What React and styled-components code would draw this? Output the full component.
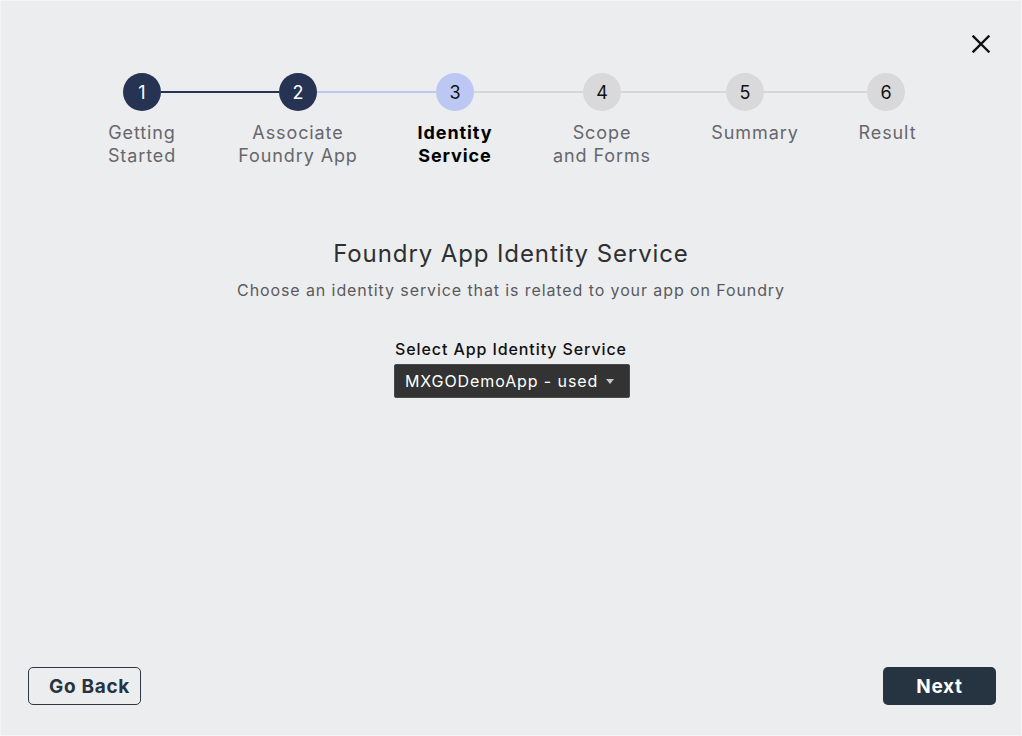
import React from 'react';
import styled, { createGlobalStyle } from 'styled-components';

const GlobalStyle = createGlobalStyle`
  html, body {
    margin: 0;
    padding: 0;
    background: #ecedef;
  }
  * {
    box-sizing: border-box;
  }
`;

const Dialog = styled.div`
  width: 1022px;
  height: 736px;
  display: flex;
  flex-direction: column;
  background: #ecedef;
  border: 1px solid #f4f4f6;
  font-family: Inter, 'Noto Sans', sans-serif;
  letter-spacing: 0.9px;
  overflow: hidden;
`;

const TopBar = styled.div`
  display: flex;
  justify-content: flex-end;
  padding: 31px 28px 0 0;
  height: 55px;
`;

const CloseButton = styled.button`
  width: 24px;
  height: 24px;
  padding: 0;
  border: none;
  background: none;
  display: flex;
  align-items: center;
  justify-content: center;
  cursor: pointer;
`;

const Stepper = styled.div`
  display: flex;
  padding-left: 62px;
  margin-top: 17px;
`;

const Step = styled.div`
  flex: 0 0 ${(p) => p.width}px;
  display: flex;
  flex-direction: column;
  align-items: center;
`;

const CircleRow = styled.div`
  width: 100%;
  display: flex;
  align-items: center;
`;

const Line = styled.div`
  flex: 1;
  height: 2px;
  background: ${(p) => p.color};
`;

const Circle = styled.div`
  width: 38px;
  height: 38px;
  border-radius: 50%;
  display: flex;
  align-items: center;
  justify-content: center;
  font-size: 18px;
  letter-spacing: 0;
  background: ${(p) =>
    p.state === 'done' ? '#263352' : p.state === 'active' ? '#bcc8f3' : '#d9d9db'};
  color: ${(p) => (p.state === 'done' ? '#ffffff' : '#111111')};
`;

const StepLabel = styled.div`
  margin-top: 10px;
  margin-left: ${(p) => p.shift || 0}px;
  font-size: 18px;
  line-height: 23px;
  text-align: center;
  white-space: nowrap;
  font-weight: ${(p) => (p.active ? 700 : 400)};
  color: ${(p) => (p.active ? '#000000' : '#67676b')};
`;

const Content = styled.div`
  display: flex;
  flex-direction: column;
  align-items: center;
  margin-top: 72px;
`;

const Title = styled.h2`
  margin: 0;
  font-size: 24px;
  line-height: 30px;
  font-weight: 400;
  color: #2f2f31;
`;

const Subtitle = styled.p`
  margin: 11px 0 0;
  font-size: 16px;
  line-height: 20px;
  color: #5a5a5e;
`;

const FieldLabel = styled.label`
  margin-top: 39px;
  font-size: 16px;
  line-height: 20px;
  font-weight: 500;
  color: #111111;
`;

const Select = styled.div`
  margin-top: 5px;
  height: 34px;
  width: 236px;
  display: flex;
  align-items: center;
  gap: 8px;
  padding: 0 10px;
  background: #333333;
  border: 1px solid #4a4a4a;
  border-radius: 2px;
  color: #ffffff;
  font-size: 16px;
  margin-left: 2px;
`;

const Caret = styled.span`
  width: 0;
  height: 0;
  border-left: 4px solid transparent;
  border-right: 4px solid transparent;
  border-top: 5px solid #c8c8c8;
  margin-top: 1px;
`;

const Spacer = styled.div`
  flex: 1;
`;

const Footer = styled.div`
  display: flex;
  justify-content: space-between;
  align-items: center;
  padding: 0 25px 30px 27px;
`;

const Button = styled.button`
  width: 113px;
  height: 38px;
  border-radius: 5px;
  font-family: Inter, 'Noto Sans', sans-serif;
  font-size: 19px;
  font-weight: 700;
  letter-spacing: 0.7px;
  cursor: pointer;
  border: ${(p) => (p.primary ? 'none' : '1.5px solid #2b3742')};
  background: ${(p) => (p.primary ? '#263441' : 'transparent')};
  color: ${(p) => (p.primary ? '#ffffff' : '#263340')};
  padding: ${(p) => (p.primary ? '0' : '0 0 0 10px')};
`;

const steps = [
  { n: 1, label: ['Getting', 'Started'], state: 'done', width: 158 },
  { n: 2, label: ['Associate', 'Foundry App'], state: 'done', width: 154 },
  { n: 3, label: ['Identity', 'Service'], state: 'active', width: 160 },
  { n: 4, label: ['Scope', 'and Forms'], state: 'todo', width: 134 },
  { n: 5, label: ['Summary'], state: 'todo', width: 152, shift: 20 },
  { n: 6, label: ['Result'], state: 'todo', width: 130, shift: 3 },
];

const lineColor = (i) => {
  if (i === 0) return '#263352';
  if (i === 1) return '#bcc8f3';
  return '#d6d6d9';
};

const App = () => {
  return (
    <>
      <GlobalStyle />
      <Dialog>
        <TopBar>
          <CloseButton aria-label="Close">
            <svg width="18" height="18" viewBox="0 0 18 18">
              <path
                d="M1.5 1.5 L16.5 16.5 M16.5 1.5 L1.5 16.5"
                stroke="#111"
                strokeWidth="2.4"
                strokeLinecap="square"
              />
            </svg>
          </CloseButton>
        </TopBar>
        <Stepper>
          {steps.map((s, i) => (
            <Step key={s.n} width={s.width}>
              <CircleRow>
                <Line color={i === 0 ? 'transparent' : lineColor(i - 1)} />
                <Circle state={s.state}>{s.n}</Circle>
                <Line color={i === steps.length - 1 ? 'transparent' : lineColor(i)} />
              </CircleRow>
              <StepLabel active={s.state === 'active'} shift={s.shift}>
                {s.label.map((l, j) => (
                  <div key={j}>{l}</div>
                ))}
              </StepLabel>
            </Step>
          ))}
        </Stepper>
        <Content>
          <Title>Foundry App Identity Service</Title>
          <Subtitle>Choose an identity service that is related to your app on Foundry</Subtitle>
          <FieldLabel>Select App Identity Service</FieldLabel>
          <Select>
            MXGODemoApp - used
            <Caret />
          </Select>
        </Content>
        <Spacer />
        <Footer>
          <Button>Go Back</Button>
          <Button primary>Next</Button>
        </Footer>
      </Dialog>
    </>
  );
};

export default App;
